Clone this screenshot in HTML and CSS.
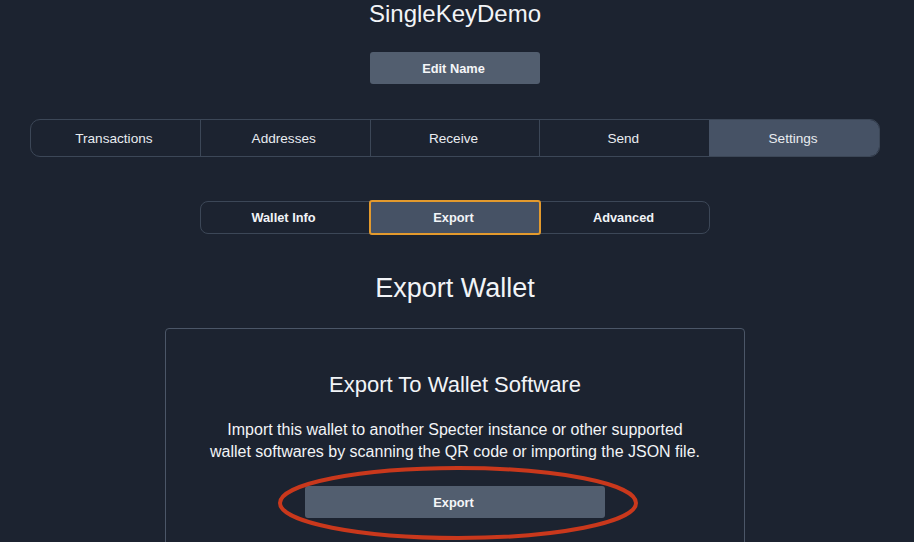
FILE: index.html
```html
<!DOCTYPE html>
<html>
<head>
<meta charset="utf-8">
<link rel="stylesheet" href="styles.css">
</head>
<body>
<div class="page">
  <h1 class="title">SingleKeyDemo</h1>
  <button class="btn edit-btn">Edit Name</button>
  <nav class="tabs">
    <div class="tab">Transactions</div>
    <div class="tab">Addresses</div>
    <div class="tab">Receive</div>
    <div class="tab">Send</div>
    <div class="tab active">Settings</div>
  </nav>
  <nav class="subtabs">
    <div class="subtab">Wallet Info</div>
    <div class="subtab active">Export</div>
    <div class="subtab">Advanced</div>
  </nav>
  <h2 class="heading">Export Wallet</h2>
  <section class="card">
    <h3 class="card-title">Export To Wallet Software</h3>
    <p class="card-text">Import this wallet to another Specter instance or other supported<br>wallet softwares by scanning the QR code or importing the JSON file.</p>
    <div class="btn-wrap">
      <button class="btn export-btn">Export</button>
      <svg class="ring" width="362" height="76" viewBox="0 0 362 76"><ellipse cx="181" cy="38" rx="178" ry="35" fill="none" stroke="#c9381c" stroke-width="4"/></svg>
    </div>
  </section>
</div>
</body>
</html>
```
FILE: styles.css
```css
html, body {
  margin: 0;
  padding: 0;
  background: #1c2330;
  color: #f2f4f7;
  font-family: "Liberation Sans", Arial, sans-serif;
}
body {
  height: 542px;
  overflow: hidden;
}
.page {
  width: 850px;
  margin: 0 0 0 30px;
  display: flex;
  flex-direction: column;
  align-items: center;
}
.page > * { flex-shrink: 0; }
.title {
  margin: 0;
  font-size: 24px;
  line-height: 28px;
  font-weight: 400;
}
.btn {
  border: none;
  border-radius: 3px;
  background: #525e6f;
  color: #f5f6f8;
  font-family: "Liberation Sans", Arial, sans-serif;
  font-weight: 700;
  font-size: 12.8px;
  height: 32px;
  padding: 0 3px 0 0;
}
.edit-btn {
  margin-top: 24px;
  width: 170px;
}
.tabs {
  margin-top: 35px;
  width: 850px;
  height: 38px;
  box-sizing: border-box;
  display: flex;
  border: 1px solid #3c4757;
  border-radius: 10px;
  overflow: hidden;
}
.tab {
  flex: 1;
  display: flex;
  align-items: center;
  justify-content: center;
  font-size: 13.6px;
  color: #e9ecf0;
  border-left: 1px solid #3c4757;
  padding-right: 3px;
}
.tab:first-child { border-left: none; }
.tab.active {
  background: #465265;
  border-left-color: #465265;
}
.subtabs {
  margin-top: 44px;
  width: 510px;
  height: 33px;
  box-sizing: border-box;
  display: flex;
  border: 1px solid #3c4757;
  border-radius: 8px;
}
.subtab {
  flex: 1;
  display: flex;
  align-items: center;
  justify-content: center;
  font-size: 12.8px;
  font-weight: 700;
  color: #f2f4f7;
  padding-right: 3px;
}
.subtab.active {
  background: #465265;
  border: 2px solid #e39a2d;
  border-radius: 3px;
  margin: -2px 0;
}
.heading {
  margin: 36px 0 0;
  font-size: 27px;
  line-height: 36px;
  font-weight: 400;
}
.card {
  margin-top: 22px;
  width: 580px;
  box-sizing: border-box;
  border: 1px solid #4b5667;
  border-radius: 4px;
  display: flex;
  flex-direction: column;
  align-items: center;
  padding-top: 41px;
  padding-bottom: 40px;
}
.card-title {
  margin: 0;
  font-size: 22px;
  line-height: 30px;
  font-weight: 400;
}
.card-text {
  margin: 19px 0 0;
  font-size: 16px;
  line-height: 22px;
  text-align: center;
}
.btn-wrap {
  position: relative;
  margin-top: 23px;
}
.export-btn {
  width: 300px;
  display: block;
}
.ring {
  position: absolute;
  left: -28px;
  top: -21px;
}
```
